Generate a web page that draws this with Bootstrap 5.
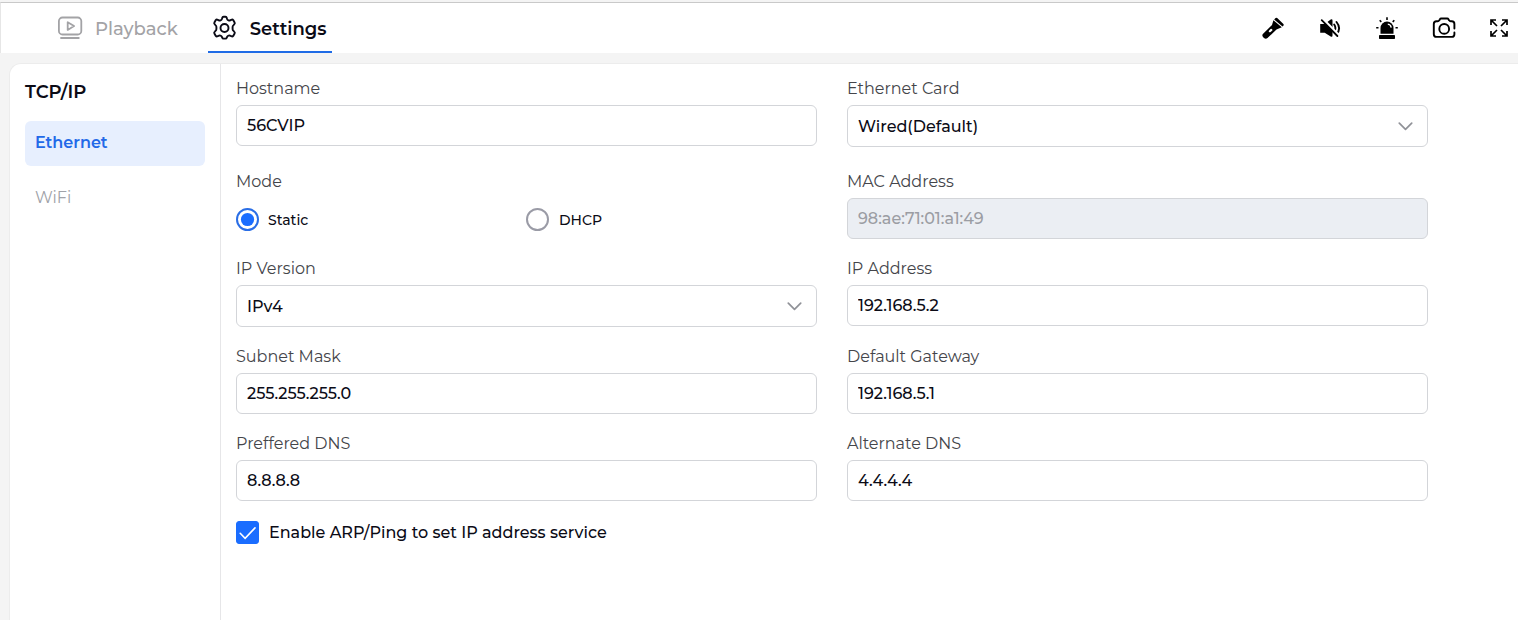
<!DOCTYPE html>
<html lang="en">
<head>
<meta charset="utf-8">
<meta name="viewport" content="width=device-width, initial-scale=1">
<title>Settings - TCP/IP</title>
<link href="https://cdn.jsdelivr.net/npm/bootstrap@5.3.0/dist/css/bootstrap.min.css" rel="stylesheet">
<style>
  :root { --accent: #1a6dff; --line: #d3d5d9; --ink: #0b0b16; }
  body { font-family: Montserrat, Inter, sans-serif; font-size: 16px; background: #f4f4f4; color: var(--ink); height: 100vh; overflow: hidden; }

  .topbar { height: 51px; margin-top: 2px; border-top: 1px solid #c9c9c9; border-left: 1px solid #e6e6e6; padding: 0 9px 0 52px; box-sizing: border-box; }
  .tabs { gap: 26px; }
  .tab { height: 50px; color: #a3a3a6; font-size: 18px; font-weight: 500; text-decoration: none; border-bottom: 2px solid transparent; padding: 5px 4px 0; white-space: nowrap; }
  .tab svg { margin: -4px 10px 0 0; flex: none; }
  .tab.current { width: 124px; color: var(--ink); font-weight: 600; border-color: #1f6be6; }
  .tab.current svg { margin-right: 12px; }
  .tools { gap: 33px; }
  .tools svg { display: block; }

  .panel { margin: 10px 0 0 9px; height: 560px; border: 1px solid #ececec; border-right: 0; border-top-left-radius: 12px; }
  .side { width: 211px; border-right: 1px solid #e6e6e8; padding: 14px 15px 0; }
  .side h1 { font-size: 18px; font-weight: 600; line-height: 28px; margin: 0 0 15px; }
  .side a { height: 45px; padding: 0 10px 1px; border-radius: 6px; text-decoration: none; color: #a0a2a8; margin-bottom: 10px; }
  .side a.current { background: #e7effe; color: #2269e8; font-weight: 600; }

  .settings { width: 1192px; margin: 12px 0 0 15px; display: grid; grid-template-columns: 581px 581px; column-gap: 30px; grid-template-rows: 93px 87px 88px 87px 89px 24px; }
  .settings .form-label { display: block; line-height: 25px; margin: 0 0 4px; font-weight: 400; color: #44454a; }
  .settings .form-control, .settings .form-select { height: 41px; border: 1px solid var(--line); border-radius: 6px; padding: 0 10px; font-size: 16px; font-weight: 500; color: var(--ink); line-height: 39px; }
  .settings .form-select { height: 42px; background-size: 15px 9px; background-position: right 14px center;
    --bs-form-select-bg-img: url("data:image/svg+xml,%3Csvg xmlns='http://www.w3.org/2000/svg' viewBox='0 0 15 9'%3E%3Cpath d='M1.3 1.2l6.2 6.1 6.2-6.1' fill='none' stroke='%23909298' stroke-width='1.7' stroke-linecap='round' stroke-linejoin='round'/%3E%3C/svg%3E"); }
  .settings .form-control:disabled { background: #ebeef3; color: #9b9da3; }

  .choice { width: 290px; font-size: 14px; font-weight: 500; }
  .choice .form-check-input { width: 23px; height: 23px; margin: 0 9px 0 0; border: 2px solid #9a9ba6; }
  .choice .form-check-input:checked { background-color: #fff; border-color: #2a6ee6;
    --bs-form-check-bg-image: url("data:image/svg+xml,%3Csvg xmlns='http://www.w3.org/2000/svg' viewBox='0 0 19 19'%3E%3Ccircle cx='9.5' cy='9.5' r='6.6' fill='%231a6dff'/%3E%3C/svg%3E") !important;
    background-image: var(--bs-form-check-bg-image) !important; }
  .choices { padding-top: 10px; height: 33px; }
  #dhcp { margin-right: 10px; }
  .choice label { padding-top: 1px; }
  .service { grid-column: 1 / 3; font-weight: 500; }
  .service label { padding-top: 1px; }
  .service .form-check-input { width: 23px; height: 23px; margin: 0 10px 0 0; border-radius: 3px; }
  .service .form-check-input:checked { background-color: var(--accent); border-color: var(--accent); background-size: 21px 21px;
    background-image: url("data:image/svg+xml,%3Csvg xmlns='http://www.w3.org/2000/svg' viewBox='0 0 21 21'%3E%3Cpath d='M3.2 11.3l4.9 5 9.9-10.4' fill='none' stroke='%23fff' stroke-width='1.6' stroke-linecap='round'/%3E%3C/svg%3E"); }
</style>
</head>
<body>
<header class="topbar bg-white d-flex justify-content-between align-items-start">
  <nav class="tabs d-flex">
    <a class="tab d-flex align-items-center" href="#">
      <svg width="28" height="26" viewBox="0 0 28 26" fill="none" stroke="currentColor" stroke-width="1.8" stroke-linecap="round" stroke-linejoin="round"><rect x="1.900" y="2.500" width="22.400" height="17" rx="3.600"/><path d="M10.700 7.300v7.600l6.400-3.800zM4 23h17.800"/></svg>
      Playback</a>
    <a class="tab current d-flex align-items-center" href="#">
      <svg width="26" height="26" viewBox="0 0 26 26" fill="none" stroke="currentColor" stroke-width="1.9" stroke-linejoin="round"><path d="M10.200 2.900Q10.500 1.700 11.500 1.700h2q1 0 1.300 1.200l.3 1.200q.3 1 1.400 1.300 1 .4 2-.2l.8-.4q1.200-.6 1.900.3l1.400 2.400q.6 1-.4 1.900l-.7.7q-.9.800-.9 1.900v2q0 1.100.9 1.900l.7.7q1 .9.400 1.900l-1.400 2.400q-.7.900-1.900.3l-.8-.4q-1-.6-2-.2-1.100.3-1.400 1.300l-.3.500q-.3 1.200-1.300 1.200h-2q-1 0-1.300-1.200l-.3-.500q-.3-1-1.400-1.300-1-.4-2 .2l-.8.4q-1.200.6-1.900-.3L2.400 18.500q-.6-1 .4-1.900l.7-.7q.9-.8.900-1.900v-2q0-1.100-.9-1.900l-.7-.7q-1-.9-.4-1.900L3.800 5.100q.7-.9 1.900-.3l.8.4q1 .6 2 .2 1.100-.3 1.400-1.300z"/><circle cx="12.500" cy="13" r="4"/></svg>
      Settings</a>
  </nav>
  <div class="tools d-flex align-items-center h-100 text-black">
    <svg width="24" height="24" viewBox="0 0 24 24" fill="currentColor"><path d="M14.300 2.200Q15.200 1.200 16.200 2.100l6.200 6q.9.900-.1 1.700l-.8.700L13.200 3.500z"/><path d="M12.400 4.200L20.800 11.300 15.500 13.500 6.500 22.100Q4.600 23.400 3 21.900L2 20.900Q.6 19.300 2.100 17.700L11 9z"/><path d="M8.900 15.200l1.400-1.300" stroke="#fff" stroke-width="2.200" stroke-linecap="round"/></svg>
    <svg width="24" height="24" viewBox="0 0 24 24"><path d="M2.200 8h4.500l6-4.500q1.800-.8 1.800 1v15q0 1.800-1.800 1L6.700 16.700H2.200z" fill="currentColor"/><path d="M16.200 8.500q2.400 3.600 0 7.200M18.500 6q5.200 6.200 0 12.400" fill="none" stroke="currentColor" stroke-width="1.900" stroke-linecap="round"/><path d="M4.300 2.800L21.600 20.300" stroke="#fff" stroke-width="3.200"/><path d="M3.700 4.200L19.400 20" stroke="currentColor" stroke-width="1.800" stroke-linecap="round"/></svg>
    <svg width="24" height="24" viewBox="0 0 24 24"><path d="M5.500 17.800V12a6.500 6.500 0 0 1 13 0v5.800z" fill="currentColor"/><rect x="4" y="19" width="16" height="4" rx=".7" fill="currentColor"/><path d="M12 1.200v2.700M4.700 4.200l1.600 1.700M19.300 4.200l-1.600 1.700M1.200 11.800h2.300M20.500 11.800h2.300" stroke="currentColor" stroke-width="1.600"/><path d="M12.800 8.200q3 .3 3.400 3.400" fill="none" stroke="#fff" stroke-width="1.300"/></svg>
    <svg width="24" height="24" viewBox="0 0 24 24" fill="none" stroke="currentColor" stroke-width="1.900" stroke-linecap="round" stroke-linejoin="round"><path d="M22.400 12.500V7.900Q22.400 5.300 19.800 5.300h-1.100q-1 0-1.500-.9l-.6-1q-.5-.9-1.500-.9H9.300q-1 0-1.500.9l-.6 1q-.5.900-1.500.9H4.400Q1.800 5.300 1.800 7.900v10.300q0 2.700 2.700 2.700h15.200q2.700 0 2.700-2.700v-1.700"/><circle cx="12.200" cy="12.900" r="4.900"/></svg>
    <svg width="20" height="20" viewBox="0 0 20 20" fill="none" stroke="currentColor" stroke-width="1.700"><path d="M2 7V2h5M13 2h5v5M18 13v5h-5M7 18H2v-5M2 2l6 6M18 2l-6 6M18 18l-6-6M2 18l6-6"/></svg>
  </div>
</header>

<main class="panel bg-white d-flex">
  <aside class="side flex-shrink-0">
    <h1>TCP/IP</h1>
    <nav class="d-flex flex-column">
      <a class="current d-flex align-items-center" href="#">Ethernet</a>
      <a class="d-flex align-items-center" href="#">WiFi</a>
    </nav>
  </aside>
  <form class="settings">
    <div><label class="form-label" for="hostname">Hostname</label><input class="form-control" id="hostname" value="56CVIP"></div>
    <div><label class="form-label" for="card-select">Ethernet Card</label><select class="form-select" id="card-select"><option>Wired(Default)</option></select></div>
    <div>
      <span class="form-label">Mode</span>
      <div class="choices d-flex">
        <div class="choice d-flex align-items-center"><input class="form-check-input" type="radio" name="mode" id="static" checked><label for="static">Static</label></div>
        <div class="choice d-flex align-items-center"><input class="form-check-input" type="radio" name="mode" id="dhcp"><label for="dhcp">DHCP</label></div>
      </div>
    </div>
    <div><label class="form-label" for="mac">MAC Address</label><input class="form-control" id="mac" value="98:ae:71:01:a1:49" disabled></div>
    <div><label class="form-label" for="ipver">IP Version</label><select class="form-select" id="ipver"><option>IPv4</option></select></div>
    <div><label class="form-label" for="ip">IP Address</label><input class="form-control" id="ip" value="192.168.5.2"></div>
    <div><label class="form-label" for="mask">Subnet Mask</label><input class="form-control" id="mask" value="255.255.255.0"></div>
    <div><label class="form-label" for="gateway">Default Gateway</label><input class="form-control" id="gateway" value="192.168.5.1"></div>
    <div><label class="form-label" for="dns1">Preffered DNS</label><input class="form-control" id="dns1" value="8.8.8.8"></div>
    <div><label class="form-label" for="dns2">Alternate DNS</label><input class="form-control" id="dns2" value="4.4.4.4"></div>
    <div class="service d-flex align-items-center"><input class="form-check-input" type="checkbox" id="arp" checked><label for="arp">Enable ARP/Ping to set IP address service</label></div>
  </form>
</main>
<script src="https://cdn.jsdelivr.net/npm/bootstrap@5.3.0/dist/js/bootstrap.bundle.min.js"></script>
</body>
</html>
